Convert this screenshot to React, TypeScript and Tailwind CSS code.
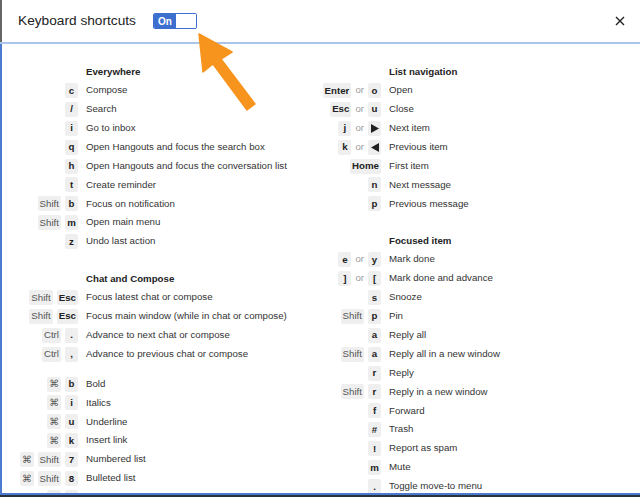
import type { ReactNode } from "react";

type Key = { k: string; mod?: boolean; or?: boolean; tri?: "right" | "left" };
type Row = { keys: Key[]; label: string };
type Section = { title?: string; gap?: "section" | "small"; rows: Row[] };

const k = (s: string): Key => ({ k: s });
const m = (s: string): Key => ({ k: s, mod: true });
const or: Key = { k: "or", or: true };

const left: Section[] = [
  {
    title: "Everywhere",
    rows: [
      { keys: [k("c")], label: "Compose" },
      { keys: [k("/")], label: "Search" },
      { keys: [k("i")], label: "Go to inbox" },
      { keys: [k("q")], label: "Open Hangouts and focus the search box" },
      { keys: [k("h")], label: "Open Hangouts and focus the conversation list" },
      { keys: [k("t")], label: "Create reminder" },
      { keys: [m("Shift"), k("b")], label: "Focus on notification" },
      { keys: [m("Shift"), k("m")], label: "Open main menu" },
      { keys: [k("z")], label: "Undo last action" },
    ],
  },
  {
    title: "Chat and Compose",
    rows: [
      { keys: [m("Shift"), k("Esc")], label: "Focus latest chat or compose" },
      { keys: [m("Shift"), k("Esc")], label: "Focus main window (while in chat or compose)" },
      { keys: [m("Ctrl"), k(".")], label: "Advance to next chat or compose" },
      { keys: [m("Ctrl"), k(",")], label: "Advance to previous chat or compose" },
    ],
  },
  {
    gap: "small",
    rows: [
      { keys: [m("⌘"), k("b")], label: "Bold" },
      { keys: [m("⌘"), k("i")], label: "Italics" },
      { keys: [m("⌘"), k("u")], label: "Underline" },
      { keys: [m("⌘"), k("k")], label: "Insert link" },
      { keys: [m("⌘"), m("Shift"), k("7")], label: "Numbered list" },
      { keys: [m("⌘"), m("Shift"), k("8")], label: "Bulleted list" },
      { keys: [m("⌘"), k("\\")], label: "Remove formatting" },
    ],
  },
];

const right: Section[] = [
  {
    title: "List navigation",
    rows: [
      { keys: [k("Enter"), or, k("o")], label: "Open" },
      { keys: [k("Esc"), or, k("u")], label: "Close" },
      { keys: [k("j"), or, { k: "", tri: "right" }], label: "Next item" },
      { keys: [k("k"), or, { k: "", tri: "left" }], label: "Previous item" },
      { keys: [k("Home")], label: "First item" },
      { keys: [k("n")], label: "Next message" },
      { keys: [k("p")], label: "Previous message" },
    ],
  },
  {
    title: "Focused item",
    rows: [
      { keys: [k("e"), or, k("y")], label: "Mark done" },
      { keys: [k("]"), or, k("[")], label: "Mark done and advance" },
      { keys: [k("s")], label: "Snooze" },
      { keys: [m("Shift"), k("p")], label: "Pin" },
      { keys: [k("a")], label: "Reply all" },
      { keys: [m("Shift"), k("a")], label: "Reply all in a new window" },
      { keys: [k("r")], label: "Reply" },
      { keys: [m("Shift"), k("r")], label: "Reply in a new window" },
      { keys: [k("f")], label: "Forward" },
      { keys: [k("#")], label: "Trash" },
      { keys: [k("!")], label: "Report as spam" },
      { keys: [k("m")], label: "Mute" },
      { keys: [k(".")], label: "Toggle move-to menu" },
    ],
  },
];

function Badge({ item }: { item: Key }) {
  if (item.or) {
    return <span className="text-[9.7px] text-[#999]">or</span>;
  }
  let content: ReactNode = item.k;
  if (item.tri) {
    content = (
      <svg width="8" height="9" viewBox="0 0 8 9" className="inline-block">
        {item.tri === "right" ? (
          <polygon points="0,0 8,4.5 0,9" fill="#222" />
        ) : (
          <polygon points="8,0 0,4.5 8,9" fill="#222" />
        )}
      </svg>
    );
  }
  return (
    <span
      className={
        "flex h-[15px] min-w-[13px] items-center justify-center rounded-[2px] bg-[#efefef] px-[2px] text-[9.7px] leading-none " +
        (item.mod ? "font-normal text-[#555]" : "font-bold text-[#222]")
      }
    >
      {content}
    </span>
  );
}

function Column({ sections, keyWidth }: { sections: Section[]; keyWidth: string }) {
  return (
    <div className="flex flex-col">
      {sections.map((sec, i) => (
        <div key={i} className={sec.gap === "small" ? "mt-[11px]" : "mt-[20px]"}>
          {sec.title ? (
            <div className="flex h-[17px] items-center">
              <div className={keyWidth} />
              <div className="pl-[8px] text-[9.7px] font-bold text-[#222]">{sec.title}</div>
            </div>
          ) : null}
          {sec.rows.map((row, j) => (
            <div key={j} className="flex h-[18.9px] items-center">
              <div className={"flex shrink-0 items-center justify-end gap-[4px] " + keyWidth}>
                {row.keys.map((key, n) => (
                  <Badge key={n} item={key} />
                ))}
              </div>
              <div className="whitespace-nowrap pl-[8px] text-[9.7px] text-[#333]">{row.label}</div>
            </div>
          ))}
        </div>
      ))}
    </div>
  );
}

export default function App() {
  return (
    <div
      className="relative flex h-[497px] w-[640px] flex-col overflow-hidden bg-white"
      style={{ fontFamily: '"Liberation Sans", Arial, "DejaVu Sans", sans-serif' }}
    >
      {/* header */}
      <div className="flex h-[42px] shrink-0 items-center border-l-2 border-[#666] pl-[16px] pr-[14px]">
        <span className="text-[13.7px] text-[#222]">Keyboard shortcuts</span>
        <div className="ml-[17px] flex h-[16px] w-[44px] overflow-hidden rounded-[2px] border border-[#3d6fcf]">
          <div className="flex w-[22px] items-center justify-center bg-[#3d6fcf] text-[10px] font-bold text-white">On</div>
          <div className="flex-1 bg-white" />
        </div>
        <div className="flex-1" />
        <svg width="10" height="10" viewBox="0 0 10 10" className="mr-[1px]">
          <path d="M1 1 L9 9 M9 1 L1 9" stroke="#222" strokeWidth="1.4" />
        </svg>
      </div>
      <div className="h-[2px] shrink-0 bg-[#aac5ea]" />

      {/* body */}
      <div className="flex min-h-0 flex-1 overflow-hidden border-b-2 border-l-2 border-[#4a7bd0]">
        <div className="w-[298px] shrink-0">
          <Column sections={left} keyWidth="w-[76px]" />
        </div>
        <div className="flex-1">
          <Column sections={right} keyWidth="w-[81px]" />
        </div>
      </div>
      <div className="h-[2px] shrink-0 bg-[#2b3340]" />

      {/* orange arrow annotation */}
      <svg className="pointer-events-none absolute left-0 top-0" width="640" height="497">
        <polygon
          points="199,34 232,52 221,59 255,104 247,110 213,64 203,72"
          fill="#f7941e"
          stroke="#f7941e"
          strokeWidth="1.5"
          strokeLinejoin="round"
        />
      </svg>
    </div>
  );
}
